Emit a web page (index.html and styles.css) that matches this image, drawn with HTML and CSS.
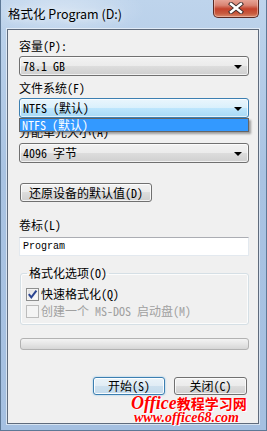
FILE: index.html
```html
<!DOCTYPE html>
<html lang="zh-CN">
<head>
<meta charset="utf-8">
<title>格式化 Program (D:)</title>
<link rel="stylesheet" href="styles.css">
</head>
<body>
<div class="window">
  <div class="titlebar">
    <span class="title">格式化 Program (D:)</span>
    <div class="close">
      <svg width="16" height="12" viewBox="0 0 16 12">
        <path d="M3 2 L13 10 M13 2 L3 10" stroke="#3a2a2a" stroke-width="4.2" stroke-linecap="square" fill="none"/>
        <path d="M3 2 L13 10 M13 2 L3 10" stroke="#ffffff" stroke-width="2.4" stroke-linecap="square" fill="none"/>
      </svg>
    </div>
  </div>
  <div class="client">
    <div class="label l1">容量(P):</div>
    <div class="combo">78.1 GB<span class="arrow"></span></div>
    <div class="label l2">文件系统(F)</div>
    <div class="dropwrap">
      <div class="combo focus">NTFS (默认)<span class="arrow"></span></div>
      <div class="droplist"><div class="item sel">NTFS (默认)</div></div>
    </div>
    <div class="label l3">分配单元大小(A)</div>
    <div class="combo c3">4096 字节<span class="arrow"></span></div>
    <div class="btn restore">还原设备的默认值(D)</div>
    <div class="label l4">卷标(L)</div>
    <div class="textbox">Program</div>
    <fieldset class="group">
      <legend>格式化选项(O)</legend>
      <div class="check first"><span class="box on"><svg width="11" height="11" viewBox="0 0 11 11"><path d="M1.8 5.2 L4.3 8.3 L9.4 1.6" stroke="#2b4592" stroke-width="2" fill="none"/></svg></span>快速格式化(Q)</div>
      <div class="check disabled"><span class="box"></span>创建一个 MS-DOS 启动盘(M)</div>
    </fieldset>
    <div class="progress"></div>
    <div class="buttons">
      <div class="btn default">开始(S)</div>
      <div class="btn">关闭(C)</div>
    </div>
  </div>
  <div class="watermark">
    <div class="wm1"><span class="en">Office</span>教程学习网</div>
    <div class="wm2">www.office68.com</div>
  </div>
</div>
</body>
</html>
```
FILE: styles.css
```css
* { box-sizing: border-box; }
html, body { margin: 0; padding: 0; }
body {
  width: 267px;
  height: 431px;
  overflow: hidden;
  font-family: "Noto Sans Mono CJK SC", "Noto Sans CJK SC", "Liberation Mono", monospace;
  font-size: 12px;
  color: #000;
}
.window {
  position: relative;
  width: 267px;
  height: 431px;
  background:
    radial-gradient(ellipse 120px 40px at 60px 10px, rgba(255,255,255,0.35), rgba(255,255,255,0) 70%),
    linear-gradient(to bottom, #bed4ec 0%, #a9c3e2 40%, #a5c0e1 100%);
  border-left: 1px solid #5d7896;
  border-right: 1px solid #5d7896;
  border-bottom: 1px solid #5d7896;
  padding-left: 6px;
}
.titlebar {
  height: 29px;
  display: flex;
  align-items: flex-start;
  justify-content: space-between;
}
.title {
  font-family: "Noto Sans CJK SC", "Noto Sans", sans-serif;
  font-size: 12.5px;
  line-height: 14px;
  margin-top: 7px;
  margin-left: 1px;
  color: #000;
  text-shadow: 0 0 6px rgba(255,255,255,0.9);
}
.close {
  width: 46px;
  height: 19px;
  margin-right: 7px;
  margin-top: -1px;
  border: 1px solid #5a2a24;
  border-top: none;
  border-radius: 0 0 5px 5px;
  background: linear-gradient(to bottom, #e9a99c 0%, #d98473 35%, #c4422c 55%, #c85a3e 80%, #d88a6c 100%);
  box-shadow: inset 0 0 0 1px rgba(255,220,210,0.45);
  display: flex;
  align-items: center;
  justify-content: center;
}
.client {
  width: 252px;
  height: 395px;
  background: #f0f0f0;
  border: 1px solid #5f6b7c;
  box-shadow: 0 0 0 1px rgba(255,255,255,0.55);
  padding: 9px 9px 0 11px;
  display: flex;
  flex-direction: column;
}
.label {
  line-height: 14px;
  height: 14px;
  white-space: nowrap;
}
.l2 { margin-top: 5px; }
.l3 { margin-top: 7px; }
.l4 { margin-top: 16px; }
.combo {
  position: relative;
  margin-top: 3px;
  height: 20px;
  width: 230px;
  border: 1px solid #707070;
  border-radius: 3px;
  background: linear-gradient(to bottom, #f2f2f2 0%, #ebebeb 50%, #dddddd 50%, #cfcfcf 100%);
  box-shadow: inset 0 0 0 1px rgba(255,255,255,0.7);
  padding-left: 3px;
  line-height: 18px;
  white-space: nowrap;
}
.combo.focus {
  border-color: #3c7fb1;
  background: linear-gradient(to bottom, #eaf6fd 0%, #d9f0fc 50%, #bee6fd 50%, #a7d9f5 100%);
}
.c3 { margin-top: 4px; }
.arrow {
  position: absolute;
  right: 6px;
  top: 8px;
  width: 0;
  height: 0;
  border-left: 4px solid transparent;
  border-right: 4px solid transparent;
  border-top: 4px solid #000;
}
.dropwrap {
  position: relative;
}
.droplist {
  position: absolute;
  left: 0;
  top: 23px;
  width: 230px;
  height: 14px;
  border: 1px solid #646464;
  background: #3399ff;
  box-shadow: 2px 2px 2px rgba(0,0,0,0.35);
  z-index: 2;
}
.item {
  color: #fff;
  line-height: 12px;
  padding-left: 2px;
  white-space: nowrap;
}
.btn {
  height: 18px;
  border: 1px solid #707070;
  border-radius: 3px;
  background: linear-gradient(to bottom, #f2f2f2 0%, #ebebeb 50%, #dddddd 50%, #cfcfcf 100%);
  box-shadow: inset 0 0 0 1px rgba(255,255,255,0.75);
  text-align: center;
  line-height: 16px;
  white-space: nowrap;
}
.restore {
  margin-top: 20px;
  margin-left: 1px;
  width: 132px;
  height: 19px;
  line-height: 17px;
}
.textbox {
  margin-top: 5px;
  width: 230px;
  height: 19px;
  background: #fff;
  border: 1px solid #e3e9ef;
  border-top-color: #abadb3;
  padding-left: 3px;
  line-height: 17px;
  font-family: "Liberation Mono", monospace;
  font-size: 10px;
}
.group {
  margin: 10px 0 0 1px;
  width: 229px;
  border: 1px solid #d5dfe5;
  border-radius: 3px;
  box-shadow: inset 0 0 0 1px rgba(255,255,255,0.8);
  padding: 0 0 6px 5px;
  min-width: 0;
}
.group legend {
  margin-left: 1px;
  padding: 0 2px;
  line-height: 14px;
  height: 14px;
}
.check {
  display: flex;
  align-items: center;
  height: 14px;
  line-height: 14px;
  white-space: nowrap;
  margin-top: 3px;
}
.check.first { margin-top: 7px; }
.check.disabled { color: #a0a0a0; }
.box {
  width: 13px;
  height: 13px;
  margin-right: 2px;
  border: 1px solid #8e8f8f;
  background: linear-gradient(135deg, #dcdcdc 0%, #f6f6f6 70%, #ffffff 100%);
  box-shadow: inset 0 0 0 1px #f4f4f4;
  display: flex;
  align-items: center;
  justify-content: center;
  flex: none;
}
.check.disabled .box {
  border-color: #bcbcbc;
  background: #f4f4f4;
}
.progress {
  margin: 13px 0 0 1px;
  width: 229px;
  height: 12px;
  border: 1px solid #b2b2b2;
  border-radius: 3px;
  background: linear-gradient(to bottom, #f3f3f3 0%, #e6e6e6 50%, #d6d6d6 100%);
}
.buttons {
  margin-top: 27px;
  margin-right: 2px;
  display: flex;
  justify-content: flex-end;
  gap: 9px;
}
.buttons .btn { width: 73px; }
.buttons .btn.default {
  width: 72px;
  border-color: #3c7fb1;
  background: linear-gradient(to bottom, #eaf3f9 0%, #e0ecf5 50%, #cde0ee 50%, #c4dbec 100%);
  box-shadow: inset 0 0 0 1px rgba(255,255,255,0.9), 0 0 2px rgba(60,160,230,0.6);
}
.watermark {
  position: absolute;
  left: 130px;
  top: 396px;
  color: #ff0000;
  font-weight: bold;
  text-shadow: 1px 1px 0 #fff, -1px 0 0 #fff;
  white-space: nowrap;
}
.wm1 {
  font-family: "Noto Sans CJK SC", sans-serif;
  font-size: 14px;
  line-height: 15px;
}
.wm1 .en {
  font-family: "Liberation Serif", serif;
  font-style: italic;
  font-size: 18px;
}
.wm2 {
  font-family: "Liberation Serif", serif;
  font-style: italic;
  font-size: 14px;
  line-height: 13px;
  margin-left: 3px;
}
```
